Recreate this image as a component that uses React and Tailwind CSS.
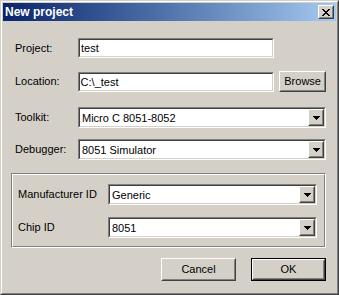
import React from "react";

// Win2000-style "New project" dialog
const face = "bg-[#d4d0c8]";

function Sunken({ className = "", children }) {
  return (
    <div
      className={
        "border border-t-[#808080] border-l-[#808080] border-r-white border-b-white " +
        className
      }
    >
      <div className="h-full border border-t-[#404040] border-l-[#404040] border-r-[#d4d0c8] border-b-[#d4d0c8] bg-white flex items-center">
        {children}
      </div>
    </div>
  );
}

function Raised({ className = "", children }) {
  return (
    <div
      className={
        "border border-t-white border-l-white border-r-[#404040] border-b-[#404040] " +
        className
      }
    >
      <div className={"h-full border border-t-[#d4d0c8] border-l-[#d4d0c8] border-r-[#808080] border-b-[#808080] flex items-center justify-center " + face}>
        {children}
      </div>
    </div>
  );
}

function TextField({ value, className = "" }) {
  return (
    <Sunken className={"h-[20px] " + className}>
      <span className="pl-[1px] pt-[1px] leading-none">{value}</span>
    </Sunken>
  );
}

function Combo({ value, className = "" }) {
  return (
    <Sunken className={"h-[21px] " + className}>
      <span className="flex-1 pl-[2px] pt-[1px] leading-none">{value}</span>
      <Raised className="w-[16px] h-[17px]">
        <svg width="7" height="4" viewBox="0 0 7 4">
          <path d="M0 0h7v1h-1v1h-1v1h-1v1h-1v-1h-1v-1h-1v-1h-1z" fill="#000" />
        </svg>
      </Raised>
    </Sunken>
  );
}

function Row({ label, children, className = "" }) {
  return (
    <div className={"flex items-center " + className}>
      <span className="ml-[4px] w-[63px] leading-none">{label}</span>
      {children}
    </div>
  );
}

export default function App() {
  return (
    <div
      className="w-[339px] h-[295px] border border-t-[#d4d0c8] border-l-[#d4d0c8] border-r-[#404040] border-b-[#404040] text-[11px] text-black"
      style={{ fontFamily: '"Liberation Sans", Arial, sans-serif' }}
    >
      <div className="h-full border border-t-white border-l-white border-r-[#808080] border-b-[#808080]">
        <div className={"h-full p-[1px] flex flex-col " + face}>
          {/* title bar */}
          <div className="h-[18px] flex items-center justify-between bg-gradient-to-r from-[#0a246a] to-[#a6caf0] pl-[2px] pr-[2px]">
            <span className="text-white font-bold text-[12px] leading-none">New project</span>
            <Raised className="w-[16px] h-[14px]">
              <svg width="8" height="7" viewBox="0 0 8 7">
                <path
                  d="M0 0h2v1h1v1h2v-1h1v-1h2v1h-1v1h-1v1h-1v1h1v1h1v1h1v1h-2v-1h-1v-1h-2v1h-1v1h-2v-1h1v-1h1v-1h1v-1h-1v-1h-1v-1h-1z"
                  fill="#000"
                />
              </svg>
            </Raised>
          </div>

          {/* body */}
          <div className="flex-1 flex flex-col pl-[8px] pr-[10px]">
            <Row label="Project:" className="mt-[17px]">
              <TextField value="test" className="w-[196px]" />
            </Row>
            <Row label="Location:" className="mt-[13px]">
              <TextField value="C:\_test" className="w-[198px]" />
              <Raised className="ml-[5px] w-[47px] h-[21px]">
                <span className="leading-none">Browse</span>
              </Raised>
            </Row>
            <Row label="Toolkit:" className="mt-[15px]">
              <Combo value="Micro C 8051-8052" className="flex-1" />
            </Row>
            <Row label="Debugger:" className="mt-[11px]">
              <Combo value="8051 Simulator" className="flex-1" />
            </Row>

            {/* group box */}
            <div className="mt-[13px] border border-t-[#808080] border-l-[#808080] border-r-white border-b-white">
              <div className="border border-t-white border-l-white border-r-[#808080] border-b-[#808080] pl-[5px] pr-[7px] pt-[9px] pb-[8px] flex flex-col">
                <div className="flex items-center">
                  <span className="w-[90px] leading-none">Manufacturer ID</span>
                  <Combo value="Generic" className="flex-1 h-[20px]" />
                </div>
                <div className="flex items-center mt-[12px]">
                  <span className="w-[90px] leading-none">Chip ID</span>
                  <Combo value="8051" className="flex-1 h-[20px]" />
                </div>
              </div>
            </div>

            {/* buttons */}
            <div className="mt-[10px] flex justify-end gap-[15px]">
              <Raised className="w-[75px] h-[23px]">
                <span className="leading-none">Cancel</span>
              </Raised>
              <div className="border border-black">
                <Raised className="w-[73px] h-[21px]">
                  <span className="leading-none">OK</span>
                </Raised>
              </div>
            </div>
          </div>
        </div>
      </div>
    </div>
  );
}
